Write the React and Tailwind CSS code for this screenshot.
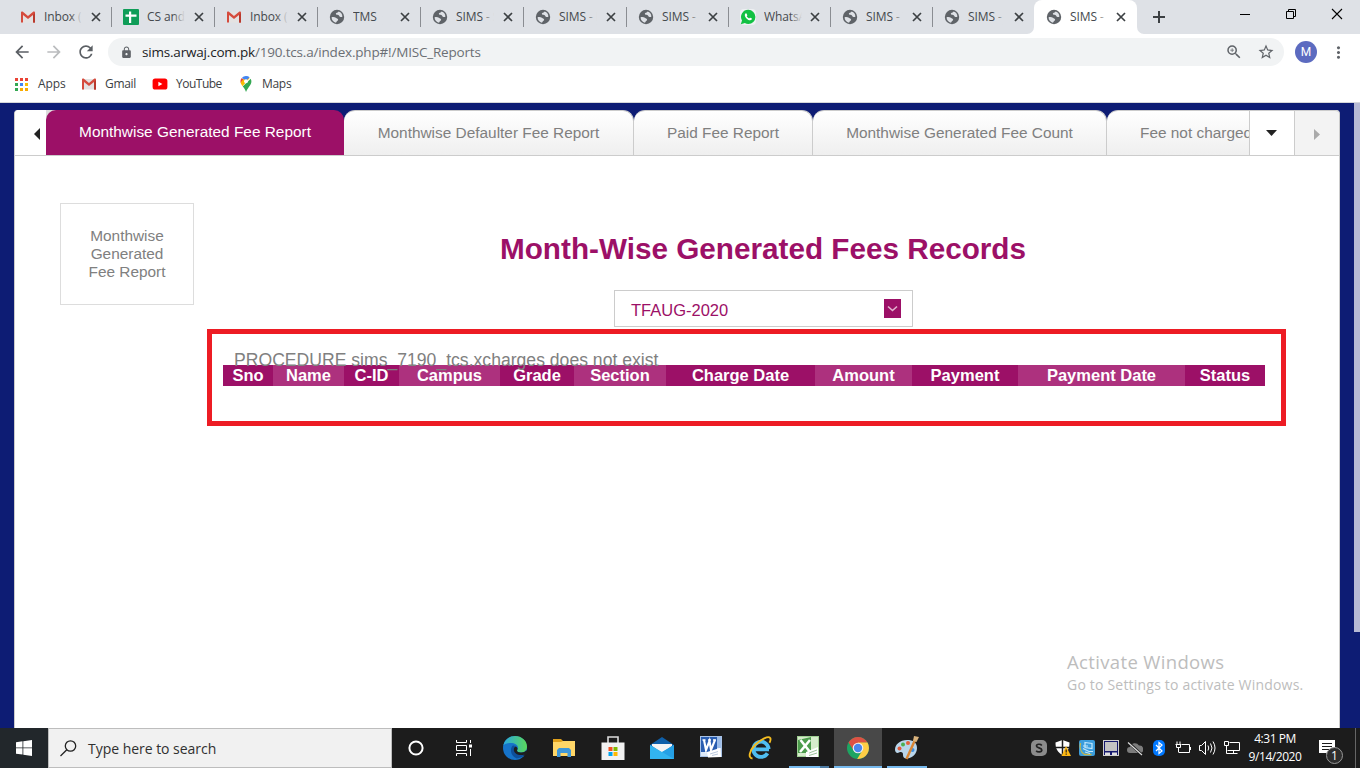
import React from "react";
import { MdArrowBack, MdArrowForward, MdRefresh, MdLock, MdZoomIn, MdStarBorder, MdMoreVert } from "react-icons/md";

const Gmail = () => (
  <svg width="16" height="16" viewBox="0 0 16 16">
    <path d="M1.500 3h13v10.500h-13z" fill="#e4e2e2" />
    <path d="M1 13.500V3.400c0-.5.5-.9 1-.9h.6L8 7l5.400-4.500h.6c.5 0 1 .4 1 .9v10.100h-2V5.900L8 10 3 5.900v7.600z" fill="#d54b3d" />
    <path d="M13 5.900l2-2v9.600h-2z" fill="#b83a2e" />
  </svg>
);
const Sheets = () => (
  <svg width="16" height="16" viewBox="0 0 16 16">
    <rect width="16" height="16" rx="1" fill="#0f9d58" />
    <path d="M6 2.500h2.200v3h5.300v2.200H8.200v6.300H6V7.700H2.500V5.500H6z" fill="#fff" />
  </svg>
);
const Globe = () => (
  <svg width="16" height="16" viewBox="0 0 16 16" className="shrink-0">
    <circle cx="8" cy="8" r="7.200" fill="#5f6368" />
    <path d="M2.600 8.200c1.600-.3 3.400-.2 4.300.6.900.8 1.900.7 2.200 1.700.2.900-.5 1.200-1.200 1.700-.5.400-.5 1-.9 1.500C4.400 13.200 2.500 11 2.600 8.200z" fill="#dee1e6" />
    <path d="M9.600 2.600c-.3 1-1.600.9-2.300 1.500-.8.600-.4 1.500.5 1.700 1.100.2 1.900.1 2.300 1 .4.900 1.400 1.600 3.200 1.100.3-2.400-1.200-4.600-3.700-5.300z" fill="#dee1e6" />
  </svg>
);
const Whats = () => (
  <svg width="16" height="16" viewBox="0 0 16 16">
    <rect width="16" height="16" fill="#eef1f3" rx="4" />
    <path d="M8.300.8a7 7 0 0 1 0 14.200c-1.200 0-2.400-.3-3.400-.9L.8 15.200l1.200-3.800A7.100 7.100 0 0 1 8.300.8z" fill="#12c143" />
    <path d="M5.700 4.300c-1.500 1-1.100 3.200.8 5.100s4.200 2.500 5.200 1.100c.4-.6.3-1-.2-1.200l-1.300-.6c-.4-.2-.6.1-1.100.7-1-.4-1.900-1.200-2.400-2.200.5-.5.700-.7.6-1l-.6-1.500c-.2-.4-.6-.6-1-.4z" fill="#fff" />
  </svg>
);

const browserTabs = [
  { icon: Gmail, title: "Inbox (1", w: "w-[103px]" },
  { icon: Sheets, title: "CS and F", w: "w-[103px]" },
  { icon: Gmail, title: "Inbox (2", w: "w-[103px]" },
  { icon: Globe, title: "TMS", w: "w-[103px]" },
  { icon: Globe, title: "SIMS - S", w: "w-[103px]" },
  { icon: Globe, title: "SIMS - I", w: "w-[103px]" },
  { icon: Globe, title: "SIMS - ", w: "w-[102px]" },
  { icon: Whats, title: "WhatsAp", w: "w-[102px]" },
  { icon: Globe, title: "SIMS - ", w: "w-[102px]" },
  { icon: Globe, title: "SIMS - ", w: "w-[102px]" },
];

const TabBody = ({ icon: Icon, title, fade, narrow }) => (
  <>
    <Icon />
    <div className="relative ml-2 h-4 w-[38px] shrink-0 overflow-hidden whitespace-nowrap text-[12px] leading-4 tracking-[-0.1px] text-[#45494d]">
      {title}
      <div className={`absolute inset-y-0 right-0 w-3 bg-linear-to-r from-transparent ${fade}`} />
    </div>
    <svg width="14" height="14" className={`shrink-0 ${narrow ? "ml-[6px]" : "ml-[7px]"}`}><path d="M3 3l8 8M11 3l-8 8" stroke="#3c4043" strokeWidth="1.700" /></svg>
  </>
);

function TabStrip() {
  return (
    <div className="flex h-[34px] items-stretch bg-[#dee1e6] pl-2">
      {browserTabs.map((t, i) => (
        <div key={i} className={`flex shrink-0 items-center pl-3 ${t.w}`}>
          <TabBody {...t} fade="to-[#dee1e6]" narrow={i > 5} />
          {i < 9 && <div className="-mr-px ml-auto h-5 w-px bg-[#8a8d92]" />}
        </div>
      ))}
      <div className="relative flex w-[103px] shrink-0 items-center rounded-t-lg bg-white pl-3">
        <TabBody icon={Globe} title="SIMS - " fade="to-white" narrow />
        <svg className="absolute -left-[7px] bottom-0" width="7" height="7"><path d="M7 0v7H0a7 7 0 0 0 7-7z" fill="#fff" /></svg>
        <svg className="absolute -right-[7px] bottom-0" width="7" height="7"><path d="M0 0v7h7a7 7 0 0 1-7-7z" fill="#fff" /></svg>
      </div>
      <svg className="mt-[10px] ml-[15px]" width="14" height="14"><path d="M7 1v12M1 7h12" stroke="#3c4043" strokeWidth="2" /></svg>
      <div className="ml-auto flex text-black">
        <svg width="46" height="28"><path d="M18 14.500h10" stroke="currentColor" /></svg>
        <svg width="46" height="28"><path d="M18.500 11.500h7v7h-7zM20.500 11.500v-2h7v7h-2" fill="none" stroke="currentColor" /></svg>
        <svg width="46" height="28"><path d="M18 9l10 10M28 9l-10 10" stroke="currentColor" strokeWidth="1.100" /></svg>
      </div>
    </div>
  );
}

function Toolbar() {
  return (
    <div className="flex h-9 items-center bg-white">
      <MdArrowBack size={20} color="#5b5f64" className="ml-3" />
      <MdArrowForward size={20} color="#babcbe" className="ml-3" />
      <MdRefresh size={20} color="#5b5f64" className="ml-3" />
      <div className="ml-3 flex h-7 w-[1176px] items-center rounded-full bg-[#f1f3f4] pl-3">
        <MdLock size={13} color="#5f6368" />
        <div className="ml-[9px] text-[13.500px] leading-5 tracking-[-0.19px] text-[#6b6f74]"><span className="text-[#202124]">sims.arwaj.com.pk</span>/190.tcs.a/index.php#!/MISC_Reports</div>
        <MdZoomIn size={18} color="#5f6368" className="ml-auto" />
        <MdStarBorder size={18} color="#5f6368" className="mr-[9px] ml-[14px]" />
      </div>
      <div className="ml-[11px] flex size-[22px] items-center justify-center rounded-full bg-[#5c6bc0] font-['Roboto',sans-serif] text-[12px] text-white">M</div>
      <MdMoreVert size={19} color="#5f6368" className="ml-3" />
    </div>
  );
}

const appDots = ["#ea4335", "#ea4335", "#ea4335", "#34a853", "#4285f4", "#fbbc04", "#34a853", "#f9ab00", "#f9ab00"];

function Bookmarks() {
  return (
    <div className="flex h-8 items-center bg-white pb-[4px] text-[12px] leading-4 text-[#3c4043]">
      <svg className="ml-[15px]" width="13" height="13">
        {appDots.map((c, i) => <rect key={i} x={(i % 3) * 5} y={Math.floor(i / 3) * 5} width="3" height="3" fill={c} />)}
      </svg>
      <span className="ml-[10px] w-[43px] tracking-[-0.1px]">Apps</span>
      <Gmail />
      <span className="ml-[8px] w-[47px] tracking-[-0.3px]">Gmail</span>
      <svg width="16" height="16" viewBox="0 0 16 16"><rect x=".6" y="2.500" width="14.800" height="11" rx="2.600" fill="#f00" /><path d="M6.400 5.700v4.600L10.400 8z" fill="#fff" /></svg>
      <span className="ml-[8px] w-[62px] tracking-[-0.5px]">YouTube</span>
      <svg width="16" height="16" viewBox="0 0 16 16">
        <path d="M3.800 2A5.400 5.400 0 0 0 3 7.800L6.400 4.200z" fill="#ea4335" />
        <path d="M3 7.800l1.500 2.400L11.600 2 8 0 3 6z" fill="#fbbc04" /><path d="M8 0a5.400 5.400 0 0 1 3.600 1.300L8.500 4.500 5.500 3 3.800 2A5.400 5.400 0 0 1 8 0z" fill="#4285f4" />
        <path d="M12.700 2.700c1.200 2.300.8 4.300-.4 6.200C10.500 11.500 9.200 13 8 16c-.7-2-1.500-3.800-3.300-5.500z" fill="#34a853" />
        <circle cx="8" cy="5.300" r="2" fill="#fff" />
      </svg>
      <span className="ml-[8px] tracking-[-0.3px]">Maps</span>
    </div>
  );
}

const reportTabs = [
  ["Monthwise Defaulter Fee Report", "w-[290px]"],
  ["Paid Fee Report", "w-[179px]"],
  ["Monthwise Generated Fee Count", "w-[294px]"],
];

function ReportTabs() {
  return (
    <div className="flex h-[46px] border-b border-[#ccc] text-[15.400px] text-[#808080]">
      <div className="flex w-[31px] items-center justify-end rounded-tl bg-white pt-[3px] pr-[6px]">
        <svg width="6" height="12"><path d="M6 0v12L0 6z" fill="#222" /></svg>
      </div>
      <div className="flex flex-1 overflow-hidden bg-linear-to-r from-[#ddd] from-[20px] to-[#0d1c74] to-[20px]">
        <div className="flex w-[298px] shrink-0 items-center justify-center rounded-t-[10px] bg-[#9c1067] pb-px text-white">Monthwise Generated Fee Report</div>
        {reportTabs.map(([t, w]) => (
          <div key={t} className={`flex shrink-0 items-center justify-center rounded-t-[11px] border-t border-r border-[#ccc] bg-linear-to-b from-white to-[#efefef] ${w}`}>{t}</div>
        ))}
        <div className="flex flex-1 items-center overflow-hidden rounded-tl-[11px] border-t border-[#ccc] bg-linear-to-b from-white to-[#efefef] pl-[33px] whitespace-nowrap">Fee not charged</div>
      </div>
      <div className="flex w-[45px] items-center justify-center border-t border-l border-[#ccc] bg-white pr-px">
        <svg width="11" height="6"><path d="M0 0h11L5.500 6z" fill="#222" /></svg>
      </div>
      <div className="flex w-[45px] items-center justify-center rounded-tr border-t border-l border-[#ccc] bg-[#f3f3f3] pt-[2px]">
        <svg width="6" height="11"><path d="M0 0v11l6-5.500z" fill="#aaa" /></svg>
      </div>
    </div>
  );
}

const columns = [
  ["Sno", "w-[50px]"], ["Name", "w-[71px]"], ["C-ID", "w-[55px]"], ["Campus", "w-[101px]"], ["Grade", "w-[74px]"], ["Section", "w-[92px]"],
  ["Charge Date", "w-[149px]"], ["Amount", "w-[97px]"], ["Payment", "w-[106px]"], ["Payment Date", "w-[167px]"], ["Status", "w-[80px]"],
];

function Page() {
  return (
    <div className="flex h-[625px] justify-between bg-[#0d1c74] pt-[7px] font-['Liberation_Sans',Arial,sans-serif]">
      <div className="ml-[14px] w-[1326px] rounded-t border-x border-[#ccc] bg-white">
        <ReportTabs />
        <div className="flex pt-[47px] pl-[45px]">
          <div className="flex h-[102px] w-[134px] shrink-0 items-center justify-center border border-[#ddd] text-center text-[15.400px] leading-[18px] text-[#808080]">
            Monthwise<br />Generated<br />Fee Report
          </div>
          <div className="ml-[13px] w-[1079px]">
            <h1 className="mt-[26px] ml-[33px] h-[39px] text-center text-[29.700px] leading-10 font-bold text-[#9c1067]">Month-Wise Generated Fees Records</h1>
            <div className="mt-[22px] ml-[407px] flex h-[37px] w-[299px] items-center justify-between border border-[#ccc] pr-[11px] pl-4 text-[16.500px] text-[#9c1067]">
              <span className="pt-[3px]">TFAUG-2020</span>
              <svg width="17" height="19"><path fill="#9c1067" d="M0 0h17v19H0z" /><path d="M4 7.500l4.500 4 4.500-4" fill="none" stroke="#e3b4d0" strokeWidth="1.600" /></svg>
            </div>
            <div className="mt-[2px] h-[97px] border-[5px] border-[#ed1c24] pt-[15px] pl-[11px]">
              <div className="relative z-10 h-4 pl-[11px] text-[17.600px] leading-[22px] whitespace-nowrap text-[#808080]">PROCEDURE sims_7190_tcs.xcharges does not exist</div>
              <div className="flex h-[21px] text-center text-[16.500px] leading-[21px] font-bold text-white">
                {columns.map(([c, w], i) => (
                  <div key={c} className={`shrink-0 ${w} ${i % 2 ? "bg-[#ad317e]" : "bg-[#9c1067]"}`}>{c}</div>
                ))}
              </div>
            </div>
          </div>
        </div>
        <div className="mt-[224px] ml-[1052px] text-[#bdbdbd]">
          <div className="font-['Open_Sans',sans-serif] text-[18.500px] leading-6 tracking-[0.35px]">Activate Windows</div>
          <div className="font-['Open_Sans',sans-serif] text-[14px] leading-[21px] tracking-[0.2px]">Go to Settings to activate Windows.</div>
        </div>
      </div>
      <div className="-mt-[7px] h-[529px] w-[6px] bg-[#b6bad5]" />
    </div>
  );
}

const Edge = () => (
  <svg width="24" height="24" viewBox="0 0 24 24">
    <defs><linearGradient id="eg" x1="0" x2="1"><stop stopColor="#2aa8e0" /><stop offset="1" stopColor="#5ad85a" /></linearGradient></defs>
    <circle cx="12" cy="12" r="12" fill="#1673c9" />
    <path d="M.3 9.500C1.500 3.700 6.300 0 12 0c7 0 12 5 12 10.700 0 3.600-2.700 5.800-6 5.800-2.400 0-4-1-4-2 0-.7 1-1 1-2.700C15 8.700 11.500 7 8 7 4.500 7 1.500 8 .3 9.500z" fill="url(#eg)" />
    <path d="M14 14.500c0 1 1.600 2 4 2 2.400 0 4.200-1 5.200-2.300l2 2.300-3 4-.7-1c-6 2.500-11.500-.5-11.500-5 0-1.900 1-3.500 2.500-4.100 2 .5 2.500 2.400 1.500 4.100z" fill="#1d1e1f" />
    <path d="M9.800 9.500c-3 2.500-2.800 10.500 4 13 3.200-.3 6-1.800 7.700-4-5.500 1.800-10.700-1-10.700-5 0-1.700.7-2.800 1.700-3.400-.8-.7-1.800-.8-2.700-.6z" fill="#0d4f9b" />
  </svg>
);
const Folder = () => (
  <svg width="22" height="20" viewBox="0 0 22 20"><path d="M0 1h8l2 2h12v4H0z" fill="#e0a01b" /><path d="M0 4h8l2-1h12v15H0z" fill="#ffd667" /><path d="M4 19v-7l2-2h10l2 2v7h-3.500v-4h-7v4z" fill="#3f97d8" /></svg>
);
const Store = () => (
  <svg width="24" height="24" viewBox="0 0 24 24"><path d="M7 8V1h10v7" fill="none" stroke="#dcdcdc" strokeWidth="1.600" /><path d="M.5 6.500h23V24H.5z" fill="#f2f2f2" /><path d="M7.500 11h4v4h-4z" fill="#f25022" /><path d="M12.500 11h4v4h-4z" fill="#7fba00" /><path d="M7.500 16h4v4h-4z" fill="#00a4ef" /><path d="M12.500 16h4v4h-4z" fill="#ffb900" /></svg>
);
const Mail = () => (
  <svg width="24" height="22" viewBox="0 0 24 22"><path d="M0 8l12-8 12 8v4H0z" fill="#0f5fa8" /><path d="M2 7h20v2l-10 7L2 9z" fill="#f4f4f4" /><path d="M0 8l12 7L24 8v14H0z" fill="#32b4f0" /><path d="M12 15L24 8v14z" fill="#1d93dd" opacity=".6" /></svg>
);
const Word = () => (
  <svg width="22" height="22" viewBox="0 0 22 22" className="-mt-[2px]"><rect x=".5" y=".5" width="21" height="20" fill="#dce8f7" stroke="#a9c3e6" /><path d="M1 1h16v15H1z" fill="#2a5db0" /><path d="M17 1h4v11h-4z" fill="#9dbde8" /><path d="M7 16l13-4 1 9-13 .5z" fill="#fff" /><path d="M10 18l8-2.500M12 19.500l6-1.500" stroke="#b9c8dd" /><path d="M2.500 4h3M8 4h3M13 4h3" stroke="#fff" strokeWidth="1.600" /><path d="M4 4l2 10 3.500-9 1.500 9 4-10" fill="none" stroke="#fff" strokeWidth="2.100" /></svg>
);
const IE = () => (
  <svg width="24" height="24" viewBox="0 0 24 24"><path d="M21 13.300H7M19.500 17.300A7.600 7.600 0 1 1 20.600 13" fill="none" stroke="#4fbdf0" strokeWidth="3.800" /><path d="M4.500 22.500c-5-.5-3-8 2.800-13.700C13 3 20.500-.5 22.200 2c.7 1.200.2 3-.7 4.700" fill="none" stroke="#f5bd20" strokeWidth="1.900" /></svg>
);
const Excel = () => (
  <svg width="22" height="22" viewBox="0 0 22 22"><rect x=".5" y=".5" width="21" height="20" fill="#d5ebcb" stroke="#9fce92" /><path d="M1 4l13-3v16H1z" fill="#4c9c4c" /><path d="M9 16l12-5v10H9z" fill="#fff" /><path d="M12 17l8-3M12 19.500l8-2.500" stroke="#9cc49a" /><path d="M3.500 4l9.500 12M13 4L3 16" stroke="#fff" strokeWidth="2.600" /></svg>
);
const ChromeLogo = () => (
  <svg width="22" height="22" viewBox="0 0 22 22"><circle cx="11" cy="11" r="11" fill="#1da462" /><path d="M1.500 5.500A11 11 0 0 1 20.500 5.500L11 6 6.700 13.500z" fill="#dd5144" /><path d="M20.500 5.500A11 11 0 0 1 11 22l-.8 0 5.100-8.500L11 6V5.500z" fill="#ffcd46" /><circle cx="11" cy="11" r="5.300" fill="#f1f1f1" /><circle cx="11" cy="11" r="4.200" fill="#4a86ee" /></svg>
);
const Paint = () => (
  <svg width="24" height="24" viewBox="0 0 24 24"><path d="M12 4C5 4 0 8.500 0 13.500c0 3 2 4 4 3 2.500-1.200 4.200 0 4 2.200-.2 2.500 1.500 4.300 4.500 3.800C18 21.500 22 17.500 22 12s-4-8-10-8z" fill="#b9d5ea" /><circle cx="4.500" cy="12.500" r="2" fill="#e05a3a" /><circle cx="8" cy="8.500" r="2" fill="#4caf50" /><circle cx="13" cy="7" r="2" fill="#e5603a" /><circle cx="17.500" cy="14" r="2" fill="#3d8fe0" /><path d="M20 4L11.500 23" stroke="#d98634" strokeWidth="2.400" /><path d="M18 5l1-5 5 1-2.500 5z" fill="#d9b27c" /></svg>
);

const apps = [["Edge", Edge], ["Files", Folder], ["Store", Store], ["Mail", Mail], ["Word", Word], ["IE", IE]];

const Tray = () => (
  <div className="flex items-center gap-2">
    <svg width="16" height="16"><rect width="16" height="16" rx="5" fill="#8c8c8c" /><path d="M10.800 5.400C9.500 3.700 5.500 3.900 5.500 6S10.800 7.700 10.800 10.100 6.400 12.400 5.200 10.700" fill="none" stroke="#222" strokeWidth="1.700" /></svg>
    <svg width="16" height="16"><path d="M7.500 0l7 2.500c0 6-2 10-7 12.500C2.500 12.500.5 8.500.5 2.500z" fill="#fff" /><path d="M7.500 0v15M1 7.500h13.500" stroke="#1c1c1c" strokeWidth="1.500" /><path d="M11 6l5 10H6.500z" fill="#fdb813" /><path d="M11.200 9.500v3M11.200 13.500v1.300" stroke="#222" strokeWidth="1.200" /></svg>
    <svg width="16" height="16"><rect width="16" height="16" rx="2" fill="#3b9ddc" /><path d="M1.500 3c-1 4 0 9 4 11.500h7" fill="none" stroke="#c9b64a" strokeWidth="1.300" /><path d="M6 2.500l7 1v5l-7-1zM4 6h5M4 8.500l6 3h4M6 12l5 1.500" fill="none" stroke="#c4e8fb" strokeWidth="1.200" /></svg>
    <svg width="16" height="16"><rect x=".5" y=".5" width="15" height="15" fill="#14186e" stroke="#cfcfcf" /><path d="M2 2h12v9H2z" fill="#c3c3c3" /><path d="M2 12.500h5V15H2zM9 12.500h5V15H9z" fill="#e0e0e0" /></svg>
    <svg width="16" height="16"><path d="M3 13a3 3 0 0 1 0-6 5 5 0 0 1 9-1.500 3.600 3.600 0 0 1 1 7.500z" fill="#7c7c7c" /><path d="M1 2l14 13" stroke="#1c1c1c" strokeWidth="2.500" /><path d="M1 2.500l14 12.500" stroke="#ddd" strokeWidth="1.200" /></svg>
    <svg width="16" height="16"><rect x="2" width="12" height="16" rx="5" fill="#0078ff" /><path d="M5 5l6 6-3 2.500v-11L11 5l-6 6" fill="none" stroke="#fff" strokeWidth="1.200" /></svg>
    <svg width="16" height="16"><path d="M7 4.500h7.500v8H4M15.500 7v3M2 1.500v3M5 1.500v3M.5 4.500h6M1.500 5v2.500h4V5M3.500 7.500v5" fill="none" stroke="#fff" /></svg>
    <svg width="17" height="16"><path d="M.5 5.500h2l4-4v13l-4-4h-2z" fill="none" stroke="#fff" /><path d="M9 5.500q1.500 2.500 0 5M11.500 3.500q3 4.500 0 9M14 1.500q4 6.500 0 13" fill="none" stroke="#fff" /></svg>
    <svg width="16" height="16"><path d="M5.500 2.500h10v8h-12M2.500 5.500v8h11M9.500 10.500v3M.5 1.500h4v4h-4z" fill="none" stroke="#fff" /></svg>
  </div>
);

function Taskbar() {
  return (
    <div className="flex h-10 bg-[#1c1c1c] font-['Open_Sans',sans-serif]">
      <div className="flex w-12 items-center justify-center bg-[#22272b]">
        <svg width="16" height="16"><path d="M0 2.200L6.500 1.300v6.200H0zM7.300 1.200L16 0v7.500H7.300zM0 8.300h6.500v6.300L0 13.700zM7.300 8.300H16V16l-8.700-1.200z" fill="#fff" /></svg>
      </div>
      <div className="flex w-[344px] items-center border border-[#bdbdbd] bg-[#f1f1f1] pl-[11px]">
        <svg width="17" height="17"><circle cx="10.500" cy="6" r="5.200" fill="none" stroke="#222" strokeWidth="1.300" /><path d="M6.800 9.800L.5 16" stroke="#222" strokeWidth="1.300" /></svg>
        <span className="ml-[11px] pt-[2px] text-[14px] leading-5 tracking-[-0.03px] text-[#303030]">Type here to search</span>
      </div>
      <div className="flex w-12 items-center justify-center"><svg width="16" height="16"><circle cx="8" cy="8" r="6.600" fill="none" stroke="#fff" strokeWidth="2" /></svg></div>
      <div className="flex w-12 items-center justify-center"><svg width="17" height="16"><path d="M.5 0v2.500h10V0M.5 16v-2.500h10V16M.5 5.500h10v5H.5zM14.500 0v3M14.500 9v7" fill="none" stroke="#fff" /><path d="M13 4.500h3v3h-3z" fill="#fff" /></svg></div>
      <div className="flex">
        {apps.map(([n, Icon]) => <div key={n} className="flex w-[49px] items-center justify-center first:ml-[3px] first:w-[48px]"><Icon /></div>)}
      </div>
      <div className="ml-[5px] flex w-10 flex-col items-center">
        <div className="flex flex-1 items-center pr-[2px]"><Excel /></div>
        <div className="flex h-[2px] w-full bg-[#76b9ed]"><div className="ml-auto w-[9px] bg-[#4d7ba3]" /></div>
      </div>
      <div className="ml-[5px] flex w-12 items-center justify-center border-b-2 border-[#76b9ed] bg-[#484848] pt-[2px]"><ChromeLogo /></div>
      <div className="ml-[5px] flex w-10 items-center justify-center border-b-2 border-[#76b9ed] pt-[2px]"><Paint /></div>
      <div className="ml-auto flex">
        <Tray />
        <div className="mr-[17px] ml-[8px] w-[54px] pt-[2px] text-center text-[12px] leading-[18px] tracking-[-0.45px] whitespace-nowrap text-white">4:31 PM<br />9/14/2020</div>
        <div className="relative w-9 pt-3">
          <svg width="17" height="17"><path d="M0 0h16v13h-5v4l-4-4H0z" fill="#fff" /><path d="M3 3.500h10M3 6.500h10M3 9.500h7" stroke="#1c1c1c" /></svg>
          <div className="absolute top-[19px] left-[7px] flex size-[17px] items-center justify-center rounded-full border border-[#999] bg-[#2e2e2e] text-[12px] leading-none text-white">1</div>
        </div>
        <div className="w-[5px] border-l border-[#666]" />
      </div>
    </div>
  );
}

export default function App() {
  return (
    <div className="h-[768px] w-[1360px] overflow-hidden font-['Open_Sans',sans-serif]">
      <TabStrip />
      <Toolbar />
      <Bookmarks />
      <div className="h-px bg-[#d5d7da]" />
      <Page />
      <Taskbar />
    </div>
  );
}
